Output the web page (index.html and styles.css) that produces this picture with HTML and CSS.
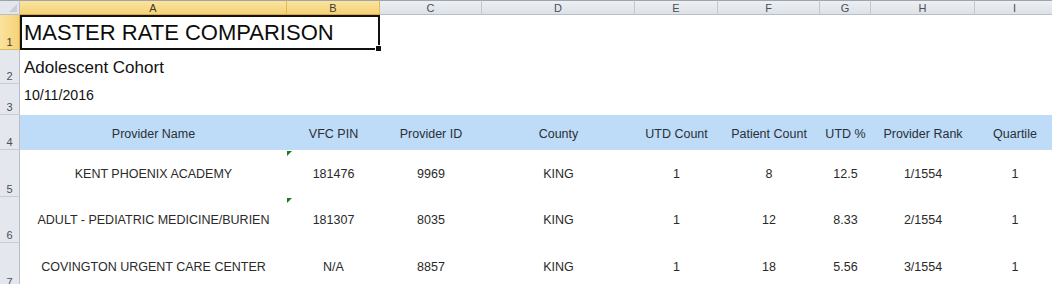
FILE: index.html
```html
<!DOCTYPE html>
<html>
<head>
<meta charset="utf-8">
<link rel="stylesheet" href="styles.css">
</head>
<body>
<div class="sheet">
  <div class="corner"><span class="corner-tri"></span></div>
  <div class="colhead sel">A</div>
  <div class="colhead sel">B</div>
  <div class="colhead">C</div>
  <div class="colhead">D</div>
  <div class="colhead">E</div>
  <div class="colhead">F</div>
  <div class="colhead">G</div>
  <div class="colhead">H</div>
  <div class="colhead">I</div>

  <div class="rowhead sel">1</div>
  <div class="title-cell"><span>MASTER RATE COMPARISON</span><span class="handle"></span></div>
  <div class="fill span7"></div>

  <div class="rowhead">2</div>
  <div class="subtitle span9">Adolescent Cohort</div>

  <div class="rowhead">3</div>
  <div class="date span9">10/11/2016</div>

  <div class="rowhead">4</div>
  <div class="th">Provider Name</div>
  <div class="th">VFC PIN</div>
  <div class="th">Provider ID</div>
  <div class="th">County</div>
  <div class="th">UTD Count</div>
  <div class="th">Patient Count</div>
  <div class="th">UTD %</div>
  <div class="th">Provider Rank</div>
  <div class="th">Quartile</div>

  <div class="rowhead">5</div>
  <div class="td">KENT PHOENIX ACADEMY</div>
  <div class="td flag">181476</div>
  <div class="td">9969</div>
  <div class="td">KING</div>
  <div class="td">1</div>
  <div class="td">8</div>
  <div class="td">12.5</div>
  <div class="td">1/1554</div>
  <div class="td">1</div>

  <div class="rowhead">6</div>
  <div class="td">ADULT - PEDIATRIC MEDICINE/BURIEN</div>
  <div class="td flag">181307</div>
  <div class="td">8035</div>
  <div class="td">KING</div>
  <div class="td">1</div>
  <div class="td">12</div>
  <div class="td">8.33</div>
  <div class="td">2/1554</div>
  <div class="td">1</div>

  <div class="rowhead">7</div>
  <div class="td">COVINGTON URGENT CARE CENTER</div>
  <div class="td">N/A</div>
  <div class="td">8857</div>
  <div class="td">KING</div>
  <div class="td">1</div>
  <div class="td">18</div>
  <div class="td">5.56</div>
  <div class="td">3/1554</div>
  <div class="td">1</div>
</div>
</body>
</html>
```

FILE: styles.css
```css
html, body {
  margin: 0;
  padding: 0;
  background: #ffffff;
  overflow: hidden;
}

.sheet {
  display: grid;
  grid-template-columns: 20px 267px 93px 102px 153px 83px 102px 51px 104px 80px;
  grid-template-rows: 15px 35px 34px 31px 35px 47px 46px 47px;
  width: 1055px;
  font-family: "Liberation Sans", Arial, sans-serif;
  color: #222;
}

.corner {
  position: relative;
  background: #e3e7ed;
  border-top: 1px solid #9ea4ab;
  border-right: 1px solid #b9bfc8;
  border-bottom: 1px solid #b9bfc8;
  box-sizing: border-box;
}
.corner-tri {
  position: absolute;
  right: 2px;
  bottom: 2px;
  width: 0;
  height: 0;
  border-left: 8px solid transparent;
  border-bottom: 8px solid #c9ced6;
}

.colhead {
  display: flex;
  align-items: center;
  justify-content: center;
  box-sizing: border-box;
  background: linear-gradient(#eceff3, #dde2e8);
  border-top: 1px solid #9ea4ab;
  border-right: 1px solid #c3c8d0;
  border-bottom: 1px solid #b9bfc8;
  font-size: 11px;
  color: #4a4e55;
  padding-top: 1px;
}
.colhead.sel {
  background: linear-gradient(#fbe39e, #f5d276);
  border-right-color: #e0b95a;
  border-bottom-color: #d8ab45;
  color: #3e3a30;
}

.rowhead {
  display: flex;
  align-items: flex-end;
  justify-content: center;
  box-sizing: border-box;
  background: #e4e8ee;
  border-right: 1px solid #b9bfc8;
  border-bottom: 1px solid #c8cdd5;
  font-size: 11px;
  color: #4a4e55;
  padding-bottom: 1px;
}
.rowhead.sel {
  background: linear-gradient(90deg, #fbe39e, #f5d276);
  border-right-color: #d8ab45;
  border-bottom-color: #e0b95a;
  color: #3e3a30;
}

.title-cell {
  grid-column: span 2;
  position: relative;
  display: flex;
  align-items: center;
  box-sizing: border-box;
  border: 2px solid #111;
  padding-left: 2px;
  padding-top: 1px;
  font-size: 22px;
  color: #0c0c0c;
  white-space: nowrap;
}
.handle {
  position: absolute;
  right: -4px;
  bottom: -4px;
  width: 5px;
  height: 5px;
  background: #111;
  border: 1px solid #fff;
}

.span7 { grid-column: span 7; }
.span9 { grid-column: span 9; }

.subtitle {
  display: flex;
  align-items: center;
  padding-left: 4px;
  padding-top: 2px;
  font-size: 17px;
  color: #111;
}
.date {
  display: flex;
  align-items: center;
  padding-left: 4px;
  padding-bottom: 10px;
  font-size: 14.2px;
  color: #111;
}

.th {
  display: flex;
  align-items: center;
  justify-content: center;
  background: #bedcf8;
  font-size: 12.5px;
  color: #2b2f36;
  padding-top: 2px;
  white-space: nowrap;
}

.td {
  position: relative;
  display: flex;
  align-items: center;
  justify-content: center;
  font-size: 12.5px;
  color: #2a2a2a;
  white-space: nowrap;
}
.td.flag::before {
  content: "";
  position: absolute;
  left: 0;
  top: 1px;
  width: 0;
  height: 0;
  border-top: 5px solid #1f7a1f;
  border-right: 5px solid transparent;
}
```
